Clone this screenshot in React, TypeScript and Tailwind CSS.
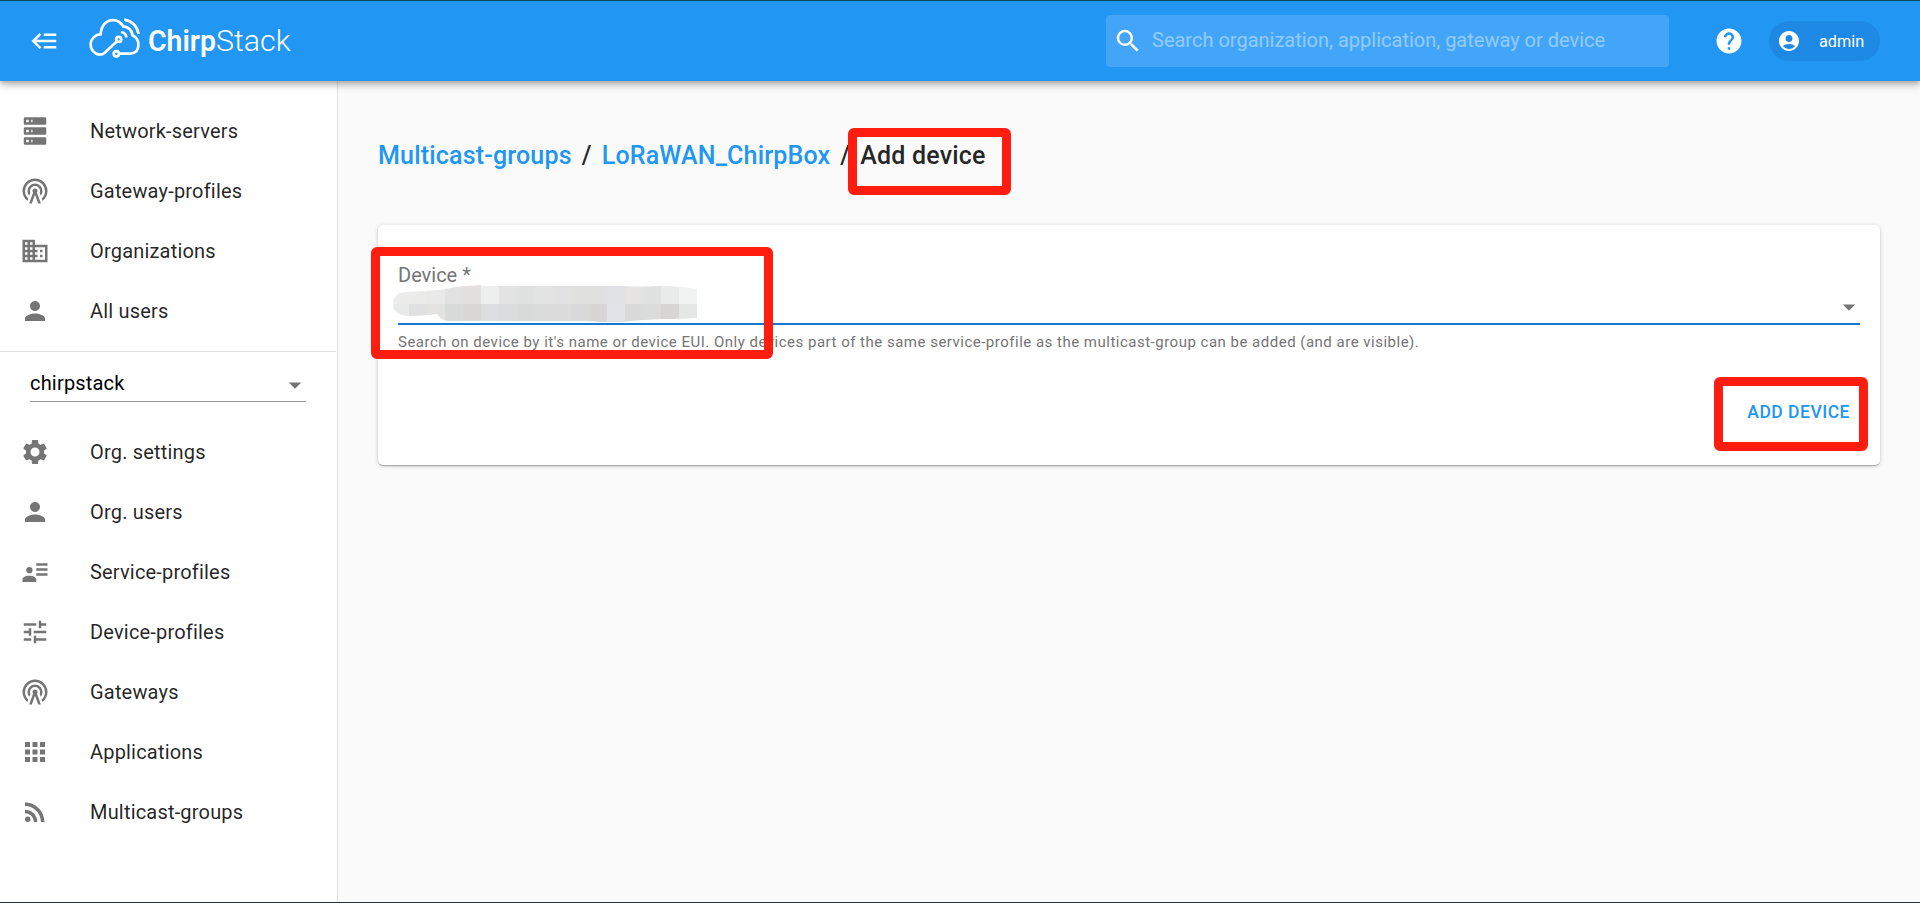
import type { ReactNode } from "react";
import {
  MdAccountCircle,
  MdApps,
  MdArrowDropDown,
  MdDomain,
  MdHelp,
  MdPerson,
  MdRssFeed,
  MdSearch,
  MdSettings,
  MdTune,
} from "react-icons/md";

function Glyph({ d }: { d: string }) {
  return (
    <svg viewBox="0 0 24 24" width="30" height="30" fill="currentColor">
      <path fillRule="evenodd" d={d} />
    </svg>
  );
}

const BACKBURGER =
  "M5,13L9,17L7.6,18.42L1.18,12L7.6,5.58L9,7L5,11H21V13H5M21,6V8H11V6H21M21,16V18H11V16H21Z";
const SERVER =
  "M4,1H20A1,1 0 0,1 21,2V6A1,1 0 0,1 20,7H4A1,1 0 0,1 3,6V2A1,1 0 0,1 4,1M4,9H20A1,1 0 0,1 21,10V14A1,1 0 0,1 20,15H4A1,1 0 0,1 3,14V10A1,1 0 0,1 4,9M4,17H20A1,1 0 0,1 21,18V22A1,1 0 0,1 20,23H4A1,1 0 0,1 3,22V18A1,1 0 0,1 4,17M9,5H10V3H9V5M9,13H10V11H9V13M9,21H10V19H9V21M5,3V5H7V3H5M5,11V13H7V11H5M5,19V21H7V19H5Z";
const TOWER =
  "M12,10A2,2 0 0,1 14,12C14,12.5 13.82,12.94 13.53,13.29L16.7,22H14.57L12,14.93L9.43,22H7.3L10.47,13.29C10.18,12.94 10,12.5 10,12A2,2 0 0,1 12,10M12,8A4,4 0 0,0 8,12C8,12.5 8.1,13 8.28,13.46L7.4,15.86C6.53,14.81 6,13.47 6,12A6,6 0 0,1 12,6A6,6 0 0,1 18,12C18,13.47 17.47,14.81 16.6,15.86L15.72,13.46C15.9,13 16,12.5 16,12A4,4 0 0,0 12,8M12,4A8,8 0 0,0 4,12C4,14.36 5,16.5 6.64,17.94L5.92,19.94C3.54,18.11 2,15.23 2,12A10,10 0 0,1 12,2A10,10 0 0,1 22,12C22,15.23 20.46,18.11 18.08,19.94L17.36,17.94C19,16.5 20,14.36 20,12A8,8 0 0,0 12,4Z";
const ACCOUNT_DETAILS =
  "M13,5H22V7H13V5M13,9H22V11H13V9M13,13H22V15H13V13M7.5,8A2.5,2.5 0 1,1 7.5,13A2.5,2.5 0 1,1 7.5,8M2,20V17.9C2,16.2 4.6,15 7.5,15C10.4,15 13,16.2 13,17.9V20Z";

function NavItem({ icon, label }: { icon: ReactNode; label: string }) {
  return (
    <li className="flex h-15 items-center pl-5">
      <span className="flex w-[70px] text-[#757575]">{icon}</span>
      <span className="text-xl tracking-[0.00938em] text-black/87">{label}</span>
    </li>
  );
}

function Logo() {
  return (
    <svg width="206" height="44" viewBox="0 0 206 44" fill="none" stroke="white">
      <g strokeWidth="2.7">
        <path d="M29.8 24.4 18 35.4C16.2 37.1 14.2 37.7 12.2 37.7A10 10.2 0 0 1 13.6 17.4C14.2 8.4 19.2 3.1 26 3.1C30.4 3.1 33.8 5.2 36.2 9.4C42 10.2 44.8 13 45.6 18.2C49.6 20.2 51.4 23.6 51.4 27.6C51.4 33.2 48.2 36.7 43.4 36.7H32.2" />
        <circle cx="31.7" cy="22.4" r="2.5" />
        <circle cx="29.3" cy="36.8" r="2.6" />
        <path d="M37.2 2.7C45 4 50 9 51.6 17M34 15C37.2 15.4 39 17.2 39.4 20.3" />
      </g>
      <g fill="white" stroke="none" fontFamily="Roboto, sans-serif">
        <text x="61" y="33.8" fontSize="30" fontWeight="600" textLength="68" lengthAdjust="spacingAndGlyphs">Chirp</text>
        <text x="129" y="33.8" fontSize="30" fontWeight="300" textLength="74.5" lengthAdjust="spacingAndGlyphs">Stack</text>
      </g>
    </svg>
  );
}

const CELL_ROWS = [
  ["#ececec", "#ebebea", "#e9e9e9", "#e2e2e2", "#e3e1df", "#edefee", "#e3e3e3", "#e0e1e1", "#e3e3e3", "#e2e2e2", "#e0e1df", "#e0e0de", "#e0e2e5", "#e6e4e2", "#dfe2e1", "#eaeaea", "#f1f2f2"],
  ["#e8e9e9", "#e0e0e0", "#e3e3e2", "#d9dada", "#d8d7d5", "#dcdfe2", "#dbdcdc", "#d8dbda", "#dbdbdb", "#dbdbdb", "#d9d9d9", "#d7d6d4", "#e0e3e7", "#dadada", "#dadbdb", "#d8d6d4", "#e4e7e6"],
];

function MaskedValue() {
  return (
    <svg className="-ml-[5px] block" width="304" height="38" viewBox="0 0 304 38">
      <defs>
        <clipPath id="smear">
          <path d="M12 7Q32 6 46 5Q66 1 88 0V1H230Q250 2 262 1Q290 1 304 4V33Q284 34 272 34Q245 35 230 37H206Q200 36 190 36H55Q48 35 44 29Q30 31 15 31Q0 30 0 19Q0 8 12 7Z" />
        </clipPath>
      </defs>
      <g clipPath="url(#smear)" shapeRendering="crispEdges">
        {CELL_ROWS.map((row, r) =>
          row.map((fill, c) => (
            <rect key={`${r}-${c}`} x={c === 0 ? 0 : c * 18 - 2} y={r * 19} width="18" height="19" fill={fill} />
          )),
        )}
      </g>
    </svg>
  );
}

export default function App() {
  return (
    <div className="relative flex h-[903px] w-[1920px] flex-col overflow-hidden border-t border-t-[#064a5e] border-b border-b-[#1f333f] bg-[#fafafa] font-[Roboto,sans-serif] text-black/87">
      <header className="relative z-10 flex h-20 shrink-0 items-center bg-[#2196f3] pr-10 pl-[30px] text-white shadow-[0_2px_5px_-1px_rgba(0,0,0,0.2),0_5px_6px_0_rgba(0,0,0,0.14),0_1px_12px_0_rgba(0,0,0,0.12)]">
        <Glyph d={BACKBURGER} />
        <div className="-mt-1 ml-[27px]">
          <Logo />
        </div>
        <div className="ml-auto flex h-[52px] w-[563px] items-center rounded bg-[#42a5f7] pl-[7px]">
          <MdSearch size={30} />
          <span className="ml-[9px] pb-0.5 text-xl text-white/42">Search organization, application, gateway or device</span>
        </div>
        <MdHelp size={30} className="ml-[45px]" />
        <div className="ml-[25px] flex h-10 w-[111px] items-center rounded-full bg-[#1e88e5] pl-2">
          <MdAccountCircle size={24} />
          <span className="ml-[18px] pt-0.5 text-[16.25px]">admin</span>
        </div>
      </header>

      <div className="flex min-h-0 flex-1">
        <aside className="w-[338px] shrink-0 border-r border-r-[#e0e0e0] bg-white pt-5">
          <ul className="mr-px border-b border-b-[#e0e0e0] pb-2.5">
            <NavItem icon={<Glyph d={SERVER} />} label="Network-servers" />
            <NavItem icon={<Glyph d={TOWER} />} label="Gateway-profiles" />
            <NavItem icon={<MdDomain size={30} />} label="Organizations" />
            <NavItem icon={<MdPerson size={30} />} label="All users" />
          </ul>
          <div className="mt-2.5 ml-[30px] flex h-10 w-[276px] items-center justify-between border-b border-b-[#949494] text-xl text-black">
            <span className="pt-0.5 tracking-[0.00938em]">chirpstack</span>
            <MdArrowDropDown size={30} className="mt-1.5 -mr-1 text-[#757575]" />
          </div>
          <ul className="mt-5">
            <NavItem icon={<MdSettings size={30} />} label="Org. settings" />
            <NavItem icon={<MdPerson size={30} />} label="Org. users" />
            <NavItem icon={<Glyph d={ACCOUNT_DETAILS} />} label="Service-profiles" />
            <NavItem icon={<MdTune size={30} />} label="Device-profiles" />
            <NavItem icon={<Glyph d={TOWER} />} label="Gateways" />
            <NavItem icon={<MdApps size={30} />} label="Applications" />
            <NavItem icon={<MdRssFeed size={30} />} label="Multicast-groups" />
          </ul>
        </aside>

        <main className="flex-1 pt-[57px] pr-10 pl-10">
          <h1 className="flex h-9 items-center text-[25px] font-medium tracking-[0.0075em]">
            <span className="text-[#2196f3]">Multicast-groups</span>
            <span className="mx-2.5">/</span>
            <span className="text-[#2196f3]">LoRaWAN_ChirpBox</span>
            <span className="mx-2.5">/</span>
            <span>Add device</span>
          </h1>

          <section className="mt-[51px] h-60 rounded-[5px] bg-white px-5 pt-[39px] shadow-[0_1px_4px_0_rgba(0,0,0,0.2),0_1px_1px_0_rgba(0,0,0,0.14),0_2px_1px_-1px_rgba(0,0,0,0.12)]">
            <div className="text-xl leading-[22px] text-[#757575]">Device *</div>
            <div className="-mt-px flex h-10 items-start justify-between border-b-2 border-b-[#1976d2]">
              <MaskedValue />
              <MdArrowDropDown size={30} className="mt-[7px] -mr-[4px] text-[#757575]" />
            </div>
            <p className="mt-2 text-[15px] leading-[18px] tracking-[0.033em] text-[#757575]">
              Search on device by it's name or device EUI. Only devices part of the same service-profile as the multicast-group can be added (and are visible).
            </p>
            <div className="mt-[38px] flex justify-end pr-[10px]">
              <button className="h-[46px] text-[17.5px] font-medium tracking-[0.02857em] text-[#2196f3]">ADD DEVICE</button>
            </div>
          </section>
        </main>
      </div>

      <div className="pointer-events-none absolute top-[127px] left-[848px] z-20 h-[67px] w-[163px] rounded-md border-9 border-[#ff1d10]" />
      <div className="pointer-events-none absolute top-[246px] left-[371px] z-20 h-[112px] w-[402px] rounded-md border-9 border-[#ff1d10]" />
      <div className="pointer-events-none absolute top-[376px] left-[1714px] z-20 h-[74px] w-[154px] rounded-md border-9 border-[#ff1d10]" />
    </div>
  );
}
